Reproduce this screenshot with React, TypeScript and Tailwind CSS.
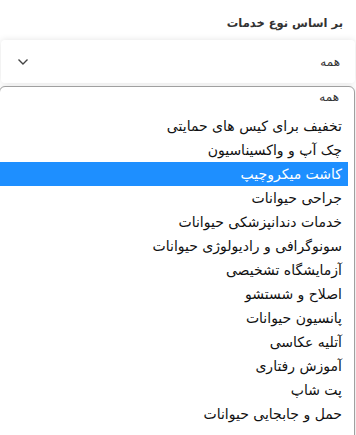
import React from "react";

const items = [
  "تخفیف برای کیس های حمایتی",
  "چک آپ و واکسیناسیون",
  "کاشت میکروچیپ",
  "جراحی حیوانات",
  "خدمات دندانپزشکی حیوانات",
  "سونوگرافی و رادیولوژی حیوانات",
  "آزمایشگاه تشخیصی",
  "اصلاح و شستشو",
  "پانسیون حیوانات",
  "آتلیه عکاسی",
  "آموزش رفتاری",
  "پت شاپ",
  "حمل و جابجایی حیوانات",
];

export default function App() {
  return (
    <div
      dir="rtl"
      className="relative w-[356px] h-[435px] overflow-hidden bg-white font-['DejaVu_Sans',sans-serif] text-[#222]"
    >
      <div className="pt-[15px] pr-[13px] h-[40px] text-[11.5px] font-bold text-[#333]">
        بر اساس نوع خدمات
      </div>
      <div className="mx-[1px] h-[43px] flex items-center justify-between pr-[15px] pl-[16px] bg-white shadow-[0_0_7px_rgba(0,0,0,0.11)] rounded-[4px]">
        <span className="text-[12px] text-[#333]">همه</span>
        <svg width="12" height="8" viewBox="0 0 12 8" className="text-[#444]">
          <path d="M1.5 1.5 L6 6 L10.5 1.5" fill="none" stroke="currentColor" strokeWidth="1.4" />
        </svg>
      </div>
      <div className="absolute top-[86px] left-[-1px] w-[356px] h-[360px] pr-[6px] bg-white border border-[#a0a0a0] rounded-[6px] shadow-[0_2px_6px_rgba(0,0,0,0.15)]">
        <div className="w-[350px] h-[27px] pr-[9px] pt-[1px] text-[12px] font-normal text-[#333]">همه</div>
        {items.map((t, i) => (
          <div
            key={i}
            className={
              i === 2
                ? "w-[350px] h-[24px] flex items-center pr-[6px] text-[14px] bg-[#1e8fff] text-white"
                : "w-[350px] h-[24px] flex items-center pr-[6px] text-[14px] text-[#111]"
            }
          >
            {t}
          </div>
        ))}
      </div>
    </div>
  );
}
